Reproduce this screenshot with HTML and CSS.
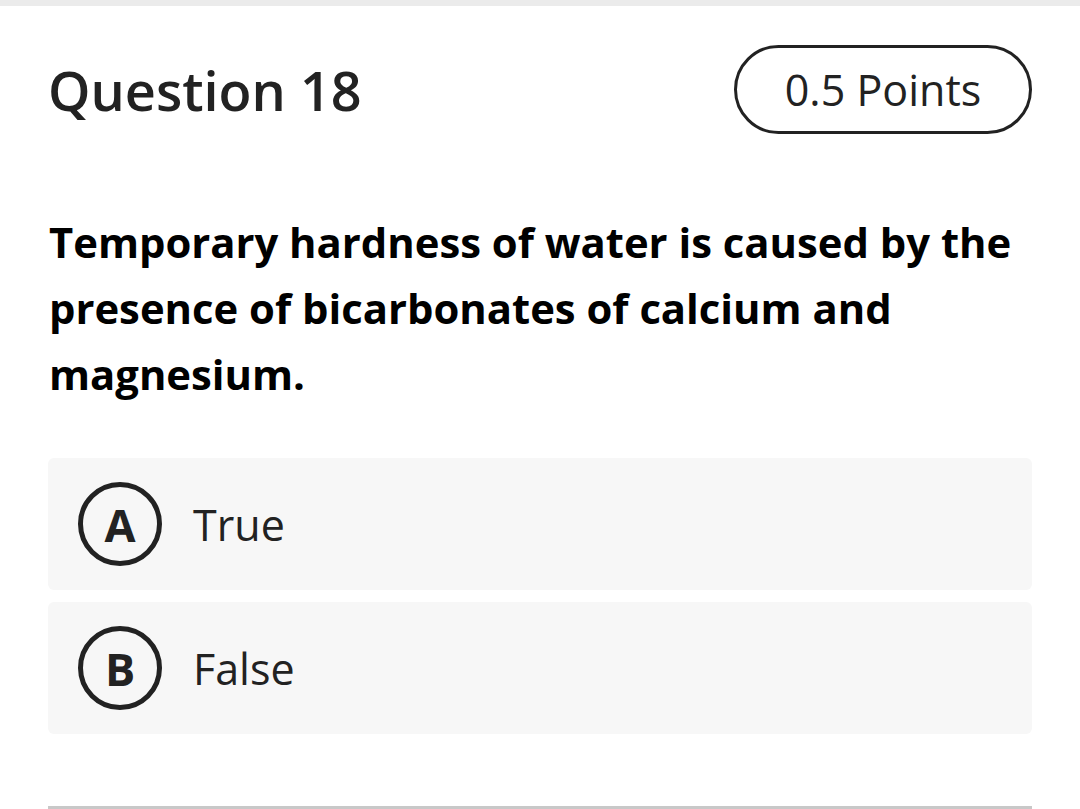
FILE: index.html
```html
<!DOCTYPE html>
<html>
<head>
<meta charset="utf-8">
<link rel="stylesheet" href="styles.css">
</head>
<body>
<div class="topbar"></div>
<main class="card">
  <header class="head">
    <h1 class="title">Question 18</h1>
    <div class="points">0.5 Points</div>
  </header>
  <p class="question">Temporary hardness of water is caused by the presence of bicarbonates of calcium and magnesium.</p>
  <div class="options">
    <div class="option"><span class="letter">A</span><span class="label">True</span></div>
    <div class="option"><span class="letter">B</span><span class="label">False</span></div>
  </div>
  <div class="rule"></div>
</main>
</body>
</html>
```
FILE: styles.css
```css
html, body { margin: 0; padding: 0; background: #fff; }
body { font-family: "Open Sans", "Noto Sans", sans-serif; color: #222; width: 1080px; height: 809px; overflow: hidden; }
.topbar { height: 6px; background: #ebebeb; }
.card { padding: 0 48px; }
.head { display: flex; justify-content: space-between; align-items: center; margin-top: 39px; height: 89px; }
.title { margin: 0; font-size: 54px; font-weight: 600; color: #222; }
.points { box-sizing: border-box; height: 89px; width: 298px; border: 3px solid #222; border-radius: 45px; display: flex; align-items: center; justify-content: center; font-size: 43px; font-weight: 500; color: #222; }
.question { margin: 75px 0 0 1px; font-size: 41.8px; font-weight: 700; line-height: 66px; color: #000; width: 984px; }
.options { margin-top: 51px; display: flex; flex-direction: column; gap: 12px; }
.option { height: 132px; background: #f7f7f7; border-radius: 6px; display: flex; align-items: center; padding-left: 30px; }
.letter { box-sizing: border-box; width: 84px; height: 84px; border: 5px solid #222; border-radius: 50%; display: flex; align-items: center; justify-content: center; font-size: 45px; font-weight: 700; color: #222; }
.label { margin-left: 31px; font-size: 43px; font-weight: 400; color: #222; }
.rule { margin-top: 72px; height: 3px; background: #c8c8c8; }
```
